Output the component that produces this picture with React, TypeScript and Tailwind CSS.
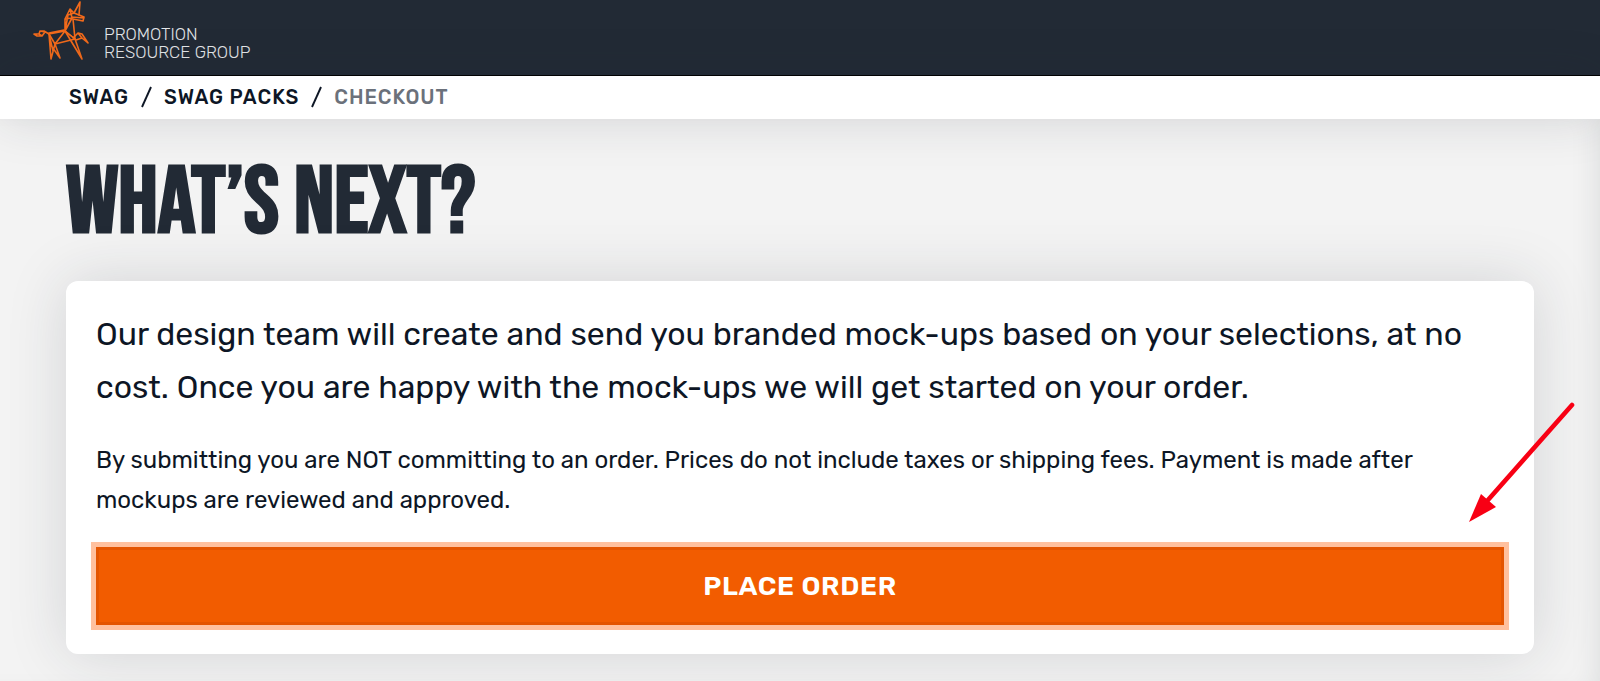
import { FormEvent } from 'react';

type Crumb = { label: string; href?: string };

const crumbs: Crumb[] = [
  { label: 'Swag', href: '#swag' },
  { label: 'Swag Packs', href: '#swag-packs' },
  { label: 'Checkout' },
];

function UnicornLogo() {
  return (
    <svg
      className="w-[66px] h-16 shrink-0"
      viewBox="0 0 66 64"
      fill="none"
      stroke="#f26a1b"
      strokeWidth="1.6"
      strokeLinejoin="round"
      strokeLinecap="round"
      aria-hidden="true"
    >
      {/* tail */}
      <path d="M21 34 16 31 12 31 11 34 6 34 9 36 14 36 17 32 12 31M11 34 14 36" />
      {/* body */}
      <path d="M21 34 37 31 47 39 27 44 21 34M37 31 27 44M21 33 36 30" />
      {/* hind legs */}
      <path d="M21 34 23 59 27 44 32 58 22 44M21 34 25 51" />
      {/* front legs */}
      <path d="M37 31 54 59 47 39M37 31 43 41 54 59M45 38 50 33 54 34 60 43 54 38 48 40M50 33 54 38" />
      {/* neck and head */}
      <path d="M37 31 37 19 42 9 44 18 37 31 47 39 45 19M37 19 44 18M42 9 46 13 56 17 55 21 45 19M37 31 40 15 46 13M44 17 56 18" />
      {/* horn */}
      <path d="M46 13 52 2 51 15" />
    </svg>
  );
}

function Header() {
  return (
    <header className="bg-[#222a35] border-b border-black">
      <a href="#home" className="flex h-[75px] w-fit items-start pl-7 text-[#e4e6e9]">
        <UnicornLogo />
        <span className="pl-2.5 pt-[25px] text-[17px] font-light leading-[18px] uppercase">
          Promotion
          <br />
          Resource Group
        </span>
      </a>
    </header>
  );
}

function Breadcrumbs() {
  return (
    <nav
      aria-label="Breadcrumb"
      className="relative bg-white px-[69px] pb-px shadow-[0_0_50px_rgba(34,42,53,0.15)]"
    >
      <ol className="flex h-[42px] items-center text-xl font-medium uppercase tracking-wider text-[#0d1625]">
        {crumbs.map((crumb, i) => (
          <li key={crumb.label} className="flex items-center">
            {i > 0 && (
              <svg className="mx-3 h-[22px] w-[11px]" viewBox="0 0 11 22" stroke="#0d1625" strokeWidth="1.9" aria-hidden="true">
                <path d="M10 1 1 21" />
              </svg>
            )}
            {crumb.href ? (
              <a href={crumb.href}>{crumb.label}</a>
            ) : (
              <span aria-current="page" className="text-[#6b717b]">{crumb.label}</span>
            )}
          </li>
        ))}
      </ol>
    </nav>
  );
}

function PointerArrow() {
  return (
    <svg
      className="pointer-events-none absolute -right-[41px] bottom-[130px] h-[122px] w-[106px]"
      viewBox="0 0 106 122"
      aria-hidden="true"
    >
      <path d="M103 3 19 98" stroke="#f80014" strokeWidth="4.6" strokeLinecap="round" />
      <path d="M0 120 12 92 27 105Z" fill="#f80014" />
    </svg>
  );
}

export default function App() {
  const handleSubmit = (e: FormEvent) => e.preventDefault();

  return (
    <div className="min-h-screen overflow-hidden bg-[#f3f3f3] font-['Rubik','Roboto',sans-serif]">
      <Header />
      <Breadcrumbs />

      <main className="px-[66px] pb-[27px] pt-[37px] shadow-[inset_-20px_0_30px_-20px_rgba(34,42,53,0.12)]">
        <h1 className="mb-[29px] font-['Rift','Bebas_Neue','Roboto',sans-serif] text-[94px] font-bold uppercase leading-[96px] text-[#222a35]">
          What’s Next?
        </h1>

        <form
          onSubmit={handleSubmit}
          className="relative rounded-xl bg-white px-[30px] pb-[29px] pt-[27px] text-[#0d1625] shadow-[0_0_60px_rgba(34,42,53,0.15)]"
        >
          <p className="text-[32px] leading-[53px]">
            Our design team will create and send you branded mock-ups based on your selections, at no
            cost. Once you are happy with the mock-ups we will get started on your order.
          </p>
          <p className="mb-[27px] mt-[26px] text-2xl leading-10">
            By submitting you are NOT committing to an order. Prices do not include taxes or shipping
            fees. Payment is made after mockups are reviewed and approved.
          </p>
          <button
            type="submit"
            className="block h-[78px] w-full bg-[#f25c00] text-[27px] font-semibold uppercase tracking-wide text-white shadow-[0_0_0_5px_#ffc09e,inset_0_0_0_3px_#e45400]"
          >
            Place Order
          </button>
          <PointerArrow />
        </form>
      </main>
    </div>
  );
}
